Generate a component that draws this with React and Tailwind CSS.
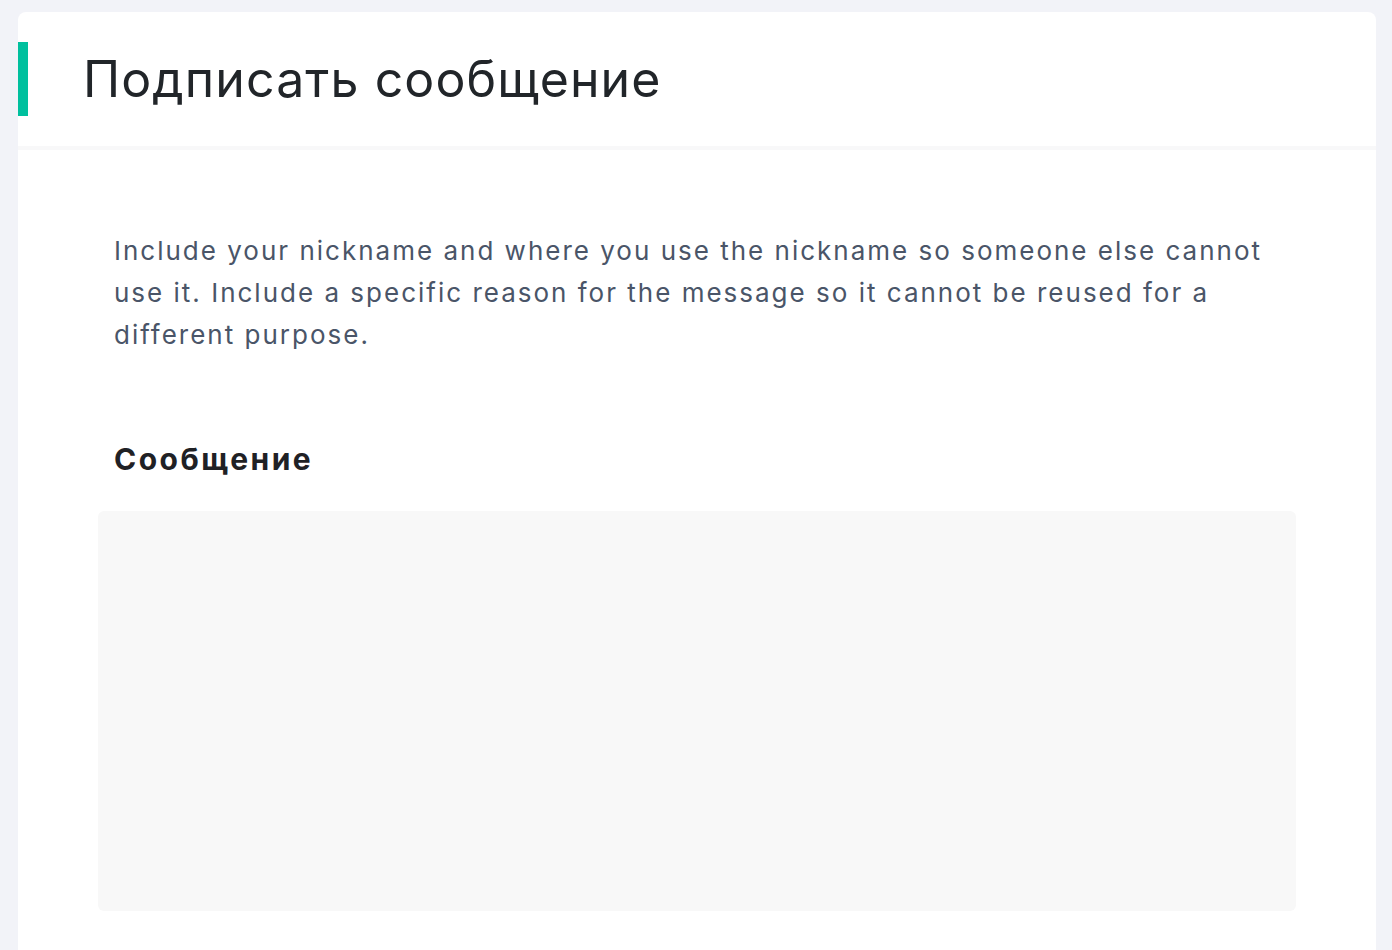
export default function App() {
    return (
        <div className="min-h-screen bg-[#f2f3f8] px-[18px] pt-3 pr-4" style={{ fontFamily: "Inter, 'Noto Sans', sans-serif" }}>
            <div className="bg-white rounded-lg overflow-hidden min-h-[960px]">
                <div className="h-[138px] flex items-center border-b-4 border-[#f8f8f9]">
                    <div className="w-[10px] h-[74px] bg-[#00c09e] self-start mt-[30px]" />
                    <h1 className="ml-[55px] text-[50px] leading-none text-[#212529] tracking-[1.1px]">
                        Подписать сообщение
                    </h1>
                </div>
                <div className="pl-20 pr-20 pt-[80px]">
                    <p className="px-4 text-[26px] leading-[42px] text-[#4a5568] tracking-[2px]">
                        Include your nickname and where you use the nickname so someone else cannot
                        <br />
                        use it. Include a specific reason for the message so it cannot be reused for a
                        <br />
                        different purpose.
                    </p>
                    <label className="block px-4 mt-[88px] text-[30px] font-bold text-[#1f2125] leading-none tracking-[2.5px]">
                        Сообщение
                    </label>
                    <textarea className="block mt-[37px] w-[1198px] h-[400px] bg-[#f8f8f8] rounded-md resize-none outline-none" />
                </div>
            </div>
        </div>
    );
}
